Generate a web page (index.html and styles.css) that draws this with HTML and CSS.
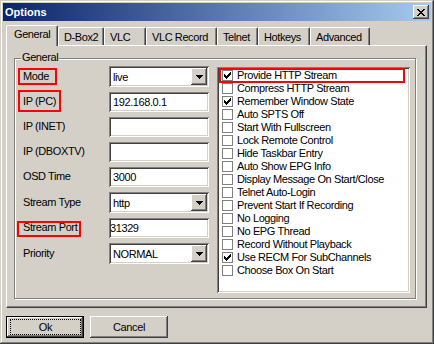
FILE: index.html
```html
<!DOCTYPE html>
<html lang="en">
<head>
    <meta charset="UTF-8">
    <title>Options</title>
    <link rel="stylesheet" href="styles.css">
</head>
<body>

    <div class="window">
        <div class="titlebar">
            <span class="title">Options</span>
            <div class="close">
                <svg width="8" height="7" viewBox="0 0 8 7" shape-rendering="crispEdges"><path d="M0 0h2v1H0zM6 0h2v1H6zM1 1h2v1H1zM5 1h2v1H5zM2 2h4v1H2zM3 3h2v1H3zM2 4h4v1H2zM1 5h2v1H1zM5 5h2v1H5zM0 6h2v1H0zM6 6h2v1H6z"/></svg>
            </div>
        </div>

        <div class="client">
            <!-- tab strip -->
            <div class="tabs">
                <div class="tab active tab-general">General</div>
                <div class="tab tab-dbox">D-Box2</div>
                <div class="tab tab-vlc">VLC</div>
                <div class="tab tab-record">VLC Record</div>
                <div class="tab tab-telnet">Telnet</div>
                <div class="tab tab-hotkeys">Hotkeys</div>
                <div class="tab tab-advanced">Advanced</div>
            </div>

            <div class="panel">
                <div class="group">
                    <div class="group-title">General</div>
                    <div class="group-body">

                        <div class="fields">
                            <div class="field">
                                <div class="label"><span class="marked mark-mode">Mode</span></div>
                                <div class="combo"><span class="combo-value">live</span><span class="combo-btn"><svg width="7" height="4" viewBox="0 0 7 4" shape-rendering="crispEdges"><path d="M0 0h7v1H0zM1 1h5v1H1zM2 2h3v1H2zM3 3h1v1H3z"/></svg></span></div>
                            </div>
                            <div class="field">
                                <div class="label"><span class="marked mark-ip">IP (PC)</span></div>
                                <div class="edit">192.168.0.1</div>
                            </div>
                            <div class="field">
                                <div class="label">IP (INET)</div>
                                <div class="edit"></div>
                            </div>
                            <div class="field">
                                <div class="label">IP (DBOXTV)</div>
                                <div class="edit"></div>
                            </div>
                            <div class="field">
                                <div class="label">OSD Time</div>
                                <div class="edit">3000</div>
                            </div>
                            <div class="field field-shift">
                                <div class="label">Stream Type</div>
                                <div class="combo"><span class="combo-value">http</span><span class="combo-btn"><svg width="7" height="4" viewBox="0 0 7 4" shape-rendering="crispEdges"><path d="M0 0h7v1H0zM1 1h5v1H1zM2 2h3v1H2zM3 3h1v1H3z"/></svg></span></div>
                            </div>
                            <div class="field">
                                <div class="label"><span class="marked mark-port">Stream Port</span></div>
                                <div class="edit edit-tight">31329</div>
                            </div>
                            <div class="field field-shift">
                                <div class="label">Priority</div>
                                <div class="combo"><span class="combo-value">NORMAL</span><span class="combo-btn"><svg width="7" height="4" viewBox="0 0 7 4" shape-rendering="crispEdges"><path d="M0 0h7v1H0zM1 1h5v1H1zM2 2h3v1H2zM3 3h1v1H3z"/></svg></span></div>
                            </div>
                        </div>

                        <div class="checklist">
                            <div class="check-item marked mark-row"><span class="box"><svg width="7" height="7" viewBox="0 0 7 7" shape-rendering="crispEdges"><path d="M6 0h1v1H6zM5 1h2v1H5zM0 2h1v1H0zM4 2h3v1H4zM0 3h2v1H0zM3 3h3v1H3zM0 4h5v1H0zM1 5h3v1H1zM2 6h1v1H2z"/></svg></span>Provide HTTP Stream</div>
                            <div class="check-item"><span class="box"></span>Compress HTTP Stream</div>
                            <div class="check-item"><span class="box"><svg width="7" height="7" viewBox="0 0 7 7" shape-rendering="crispEdges"><path d="M6 0h1v1H6zM5 1h2v1H5zM0 2h1v1H0zM4 2h3v1H4zM0 3h2v1H0zM3 3h3v1H3zM0 4h5v1H0zM1 5h3v1H1zM2 6h1v1H2z"/></svg></span>Remember Window State</div>
                            <div class="check-item"><span class="box"></span>Auto SPTS Off</div>
                            <div class="check-item"><span class="box"></span>Start With Fullscreen</div>
                            <div class="check-item"><span class="box"></span>Lock Remote Control</div>
                            <div class="check-item"><span class="box"></span>Hide Taskbar Entry</div>
                            <div class="check-item"><span class="box"></span>Auto Show EPG Info</div>
                            <div class="check-item"><span class="box"></span>Display Message On Start/Close</div>
                            <div class="check-item"><span class="box"></span>Telnet Auto-Login</div>
                            <div class="check-item"><span class="box"></span>Prevent Start If Recording</div>
                            <div class="check-item"><span class="box"></span>No Logging</div>
                            <div class="check-item"><span class="box"></span>No EPG Thread</div>
                            <div class="check-item"><span class="box"></span>Record Without Playback</div>
                            <div class="check-item"><span class="box"><svg width="7" height="7" viewBox="0 0 7 7" shape-rendering="crispEdges"><path d="M6 0h1v1H6zM5 1h2v1H5zM0 2h1v1H0zM4 2h3v1H4zM0 3h2v1H0zM3 3h3v1H3zM0 4h5v1H0zM1 5h3v1H1zM2 6h1v1H2z"/></svg></span>Use RECM For SubChannels</div>
                            <div class="check-item"><span class="box"></span>Choose Box On Start</div>
                        </div>

                    </div>
                </div>
            </div>

            <div class="buttons">
                <button class="btn default"><span class="focus">Ok</span></button>
                <button class="btn">Cancel</button>
            </div>
        </div>
    </div>

</body>
</html>
```

FILE: styles.css
```css
body {
    margin: 0;
    font-family: "Liberation Sans", Arial, sans-serif;
    font-size: 11px;
    letter-spacing: -0.4px;
    color: #000;
}

/* window frame */
.window {
    width: 434px;
    height: 344px;
    box-sizing: border-box;
    padding: 3px;
    background: #d4d0c8;
    box-shadow: inset -1px -1px #404040, inset 1px 1px #d4d0c8, inset -2px -2px #808080, inset 2px 2px #fff;
    display: flex;
    flex-direction: column;
}

.titlebar {
    height: 18px;
    flex: none;
    display: flex;
    align-items: center;
    justify-content: space-between;
    padding-left: 2px;
    background: linear-gradient(to right, #0a246a, #a6caf0);
}
.title {
    color: #fff;
    font-weight: bold;
    letter-spacing: 0;
}
.close {
    width: 16px;
    height: 14px;
    margin-right: 2px;
    background: #d4d0c8;
    box-shadow: inset -1px -1px #404040, inset 1px 1px #fff, inset -2px -2px #808080;
    display: flex;
    align-items: center;
    justify-content: center;
}

.client {
    flex: 1;
    display: flex;
    flex-direction: column;
    padding: 0 4px 0 3px;
}

/* tabs */
.tabs {
    display: flex;
    align-items: flex-end;
    height: 20px;
    margin-top: 4px;
}
.tab {
    box-sizing: border-box;
    height: 18px;
    padding: 3px 0 0 5px;
    line-height: 13px;
    border-top: 1px solid #fff;
    border-left: 1px solid #fff;
    border-right: 1px solid #404040;
    border-radius: 2px 2px 0 0;
    box-shadow: inset -1px 0 #808080;
    white-space: nowrap;
}
.tab.active {
    height: 21px;
    margin-bottom: -1px;
    padding: 2px 0 0 7px;
    position: relative;
    z-index: 1;
    background: #d4d0c8;
}
.tab-general { width: 52px; }
.tab-dbox { width: 46px; }
.tab-vlc { width: 42px; }
.tab-record { width: 71px; }
.tab-telnet { width: 41px; }
.tab-hotkeys { width: 52px; }
.tab-advanced { width: 60px; }

.panel {
    flex: none;
    width: 421px;
    height: 263px;
    box-sizing: border-box;
    border-top: 1px solid #fff;
    border-left: 1px solid #fff;
    border-right: 1px solid #404040;
    border-bottom: 1px solid #404040;
    box-shadow: inset -1px -1px #808080;
    padding: 12px 10px 8px 7px;
    display: flex;
    flex-direction: column;
}

/* group box */
.group {
    flex: 1;
    border: 1px solid #808080;
    box-shadow: inset 1px 1px #fff, 1px 1px #fff;
    display: flex;
    flex-direction: column;
}
.group-title {
    align-self: flex-start;
    margin: -8px 0 0 6px;
    padding: 0 1px;
    line-height: 13px;
    background: #d4d0c8;
}
.group-body {
    display: flex;
    gap: 8px;
    padding: 0 5px 0 8px;
}

.fields {
    width: 186px;
    display: flex;
    flex-direction: column;
}
.field {
    height: 25px;
    display: flex;
    align-items: center;
}
.field-shift { margin-top: 1px; }
.label {
    width: 86px;
    line-height: 13px;
    white-space: nowrap;
}

.combo, .edit {
    width: 100px;
    box-sizing: border-box;
    background: #fff;
    box-shadow: inset 1px 1px #808080, inset -1px -1px #fff, inset 2px 2px #404040, inset -2px -2px #d4d0c8;
}
.combo {
    height: 21px;
    padding: 2px;
    display: flex;
    align-items: center;
}
.combo-value {
    flex: 1;
    padding-left: 2px;
}
.combo-btn {
    width: 16px;
    height: 17px;
    background: #d4d0c8;
    box-shadow: inset -1px -1px #404040, inset 1px 1px #fff, inset -2px -2px #808080;
    display: flex;
    align-items: center;
    justify-content: center;
}
.edit {
    height: 20px;
    padding: 0 2px 0 4px;
    display: flex;
    align-items: center;
}
.edit-tight { padding-left: 1px; }

/* check list */
.checklist {
    width: 193px;
    height: 226px;
    margin-top: 3px;
    box-sizing: border-box;
    padding: 2px;
    background: #fff;
    box-shadow: inset 1px 1px #808080, inset -1px -1px #fff, inset 2px 2px #404040, inset -2px -2px #d4d0c8;
}
.check-item {
    height: 13px;
    line-height: 13px;
    padding-left: 3px;
    display: flex;
    align-items: center;
    white-space: nowrap;
}
.box {
    width: 11px;
    height: 11px;
    box-sizing: border-box;
    border: 1px solid #808080;
    margin-right: 4px;
    display: flex;
    align-items: center;
    justify-content: center;
}

/* red annotation boxes */
.marked {
    position: relative;
    display: inline-block;
}
.marked::after {
    content: "";
    position: absolute;
    border: 2px solid #f00;
}
.mark-mode::after { top: -2px; bottom: -2px; left: -5px; right: -8px; }
.mark-ip::after { top: -5px; bottom: -4px; left: -5px; right: -5px; }
.mark-port::after { top: 0; bottom: -3px; left: -6px; right: -4px; }
.mark-row { display: flex; }
.mark-row::after { top: -1px; bottom: -1px; left: 0; right: 3px; }

/* buttons */
.buttons {
    display: flex;
    gap: 6px;
    margin-top: 8px;
}
.btn {
    width: 78px;
    height: 22px;
    box-sizing: border-box;
    padding: 0;
    border: 0;
    font: inherit;
    letter-spacing: inherit;
    color: #000;
    background: #d4d0c8;
    box-shadow: inset -1px -1px #404040, inset 1px 1px #fff, inset -2px -2px #808080;
}
.btn.default {
    border: 1px solid #000;
    display: flex;
}
.focus {
    flex: 1;
    margin: 2px 2px 2px 3px;
    border: 1px dotted #000;
    display: flex;
    align-items: center;
    justify-content: center;
}
```
